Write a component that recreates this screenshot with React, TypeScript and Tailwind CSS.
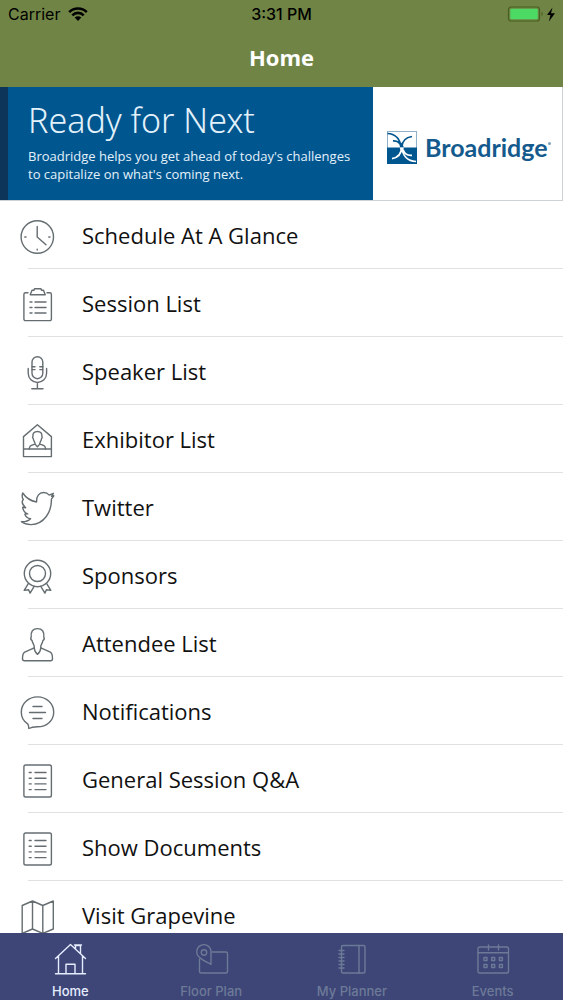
import type { ReactNode } from 'react'

function LineIcon({ children }: { children: ReactNode }) {
  return (
    <svg
      viewBox="0 0 36 36"
      className="size-9 shrink-0"
      fill="none"
      stroke="currentColor"
      strokeWidth="1.4"
      strokeLinecap="round"
      strokeLinejoin="round"
      aria-hidden="true"
    >
      {children}
    </svg>
  )
}

function ClockIcon() {
  return (
    <LineIcon>
      <circle cx="18.3" cy="18" r="16.2" />
      <path d="M18.2 7.5V18l8.8 7.8M5.8 18h1.2M29.8 18H31M18.2 30.2v.8" />
    </LineIcon>
  )
}

function ClipboardIcon() {
  return (
    <LineIcon>
      <path d="M9 5.8H6.5a1.6 1.6 0 0 0-1.6 1.6V32a1.6 1.6 0 0 0 1.6 1.6h24.3a1.6 1.6 0 0 0 1.6-1.6V7.4a1.6 1.6 0 0 0-1.6-1.6H28" />
      <path d="M11.200 7.800 13 3.300h2l.5-1.600h6.500l.5 1.600h2l1.700 4.500Z" />
      <path d="M11 15h2M16 15h11M11 20.5h2M16 20.5h11M11 26h2M16 26h11" />
    </LineIcon>
  )
}

function MicIcon() {
  return (
    <LineIcon>
      <rect x="13" y="1.7" width="10.8" height="22" rx="5.4" />
      <path d="M9.200 13.500v4.800a9.200 9.200 0 0 0 18.400 0v-4.800M18.400 27.700v6M12.800 33.700h11.200" />
      <path d="M13 11.800h3M20.800 11.800h3M13 14.600h3M20.800 14.600h3" />
    </LineIcon>
  )
}

function ExhibitorIcon() {
  return (
    <LineIcon>
      <path d="M4.500 13.600 18.400 1.800l14 11.800v20H4.500ZM4.500 26h28" />
      <path d="M10.300 26c.1-3 .7-3.600 5.700-4.900.7-1.500-1.500-2.600-1.700-5.300-.8-.8-.9-1.700-.4-2.500-.3-3 1.300-4.800 4.500-4.800s4.800 1.800 4.500 4.800c.5.8.4 1.700-.4 2.500-.2 2.700-2.400 3.800-1.700 5.300 5 1.300 5.600 1.900 5.700 4.900M16 21.100l2.400 2.700 2.400-2.700" />
    </LineIcon>
  )
}

function BirdIcon() {
  return (
    <LineIcon>
      <path d="M3.700 2c3.400 5 8 8 13.900 9C17.300 5.200 20 1.500 24.600 1.500c2.500 0 4.300 1 5.700 2.600l4-1.800-1.700 3 2.200-.5-2.400 3.400C32.800 21 25 33 12.300 33.600c-4 .1-7.300-.9-9.900-2.800 4 .2 6.900-.8 9.200-3-3-.6-5-2.200-5.800-4.700l2.900-.2c-3-1.100-4.700-3.500-5-6.700l2.900.6C3.300 13.700 2.400 10.600 4.300 8.500 2.900 6.500 2.900 4.400 3.700 2Z" />
    </LineIcon>
  )
}

function RibbonIcon() {
  return (
    <LineIcon>
      <circle cx="18.5" cy="14.5" r="13.2" />
      <circle cx="18.5" cy="14.5" r="8" />
      <path d="m9.300 24.700-4.100 6.700 4.400-.6 1.500 3.300 4.100-6.800M27.700 24.700l4.100 6.700-4.400-.6-1.500 3.300-4.100-6.800" />
    </LineIcon>
  )
}

function PersonIcon() {
  return (
    <LineIcon>
      <path d="M15.200 20.800c.9-2.200-1.700-4-2.100-7.200-1.400-.9-1.600-2.400-.9-3.600-.6-5.400 1.600-8.400 6.300-8.400s6.900 3 6.300 8.400c.7 1.200.5 2.700-.9 3.600-.4 3.200-3 5-2.100 7.200l9.500 4.300c1.800 1 2.200 3.200 2.200 6.700 0 1.200-.7 1.900-1.900 1.900H5.400c-1.200 0-1.900-.7-1.900-1.900 0-3.500.4-5.700 2.200-6.700Z" />
      <path d="M15.200 20.800c.3 3.300 1.500 5.300 3.300 6.600 1.800-1.300 3-3.300 3.300-6.600" />
    </LineIcon>
  )
}

function MessageIcon() {
  return (
    <LineIcon>
      <path d="M9.800 33.500c-.1-1.800-.2-3.200-.9-4.400C4.700 26.300 2.300 22 2.300 17.200c0-8.500 7.200-15.300 16.200-15.300s16.200 6.800 16.200 15.300-7.200 14.600-16.200 14.600c-3.500 0-6.200.3-8.700 1.700Z" />
      <path d="M14 11.500h9M10.500 17.500h16M14 23.500h9" />
    </LineIcon>
  )
}

function DocumentIcon() {
  return (
    <LineIcon>
      <rect x="4.9" y="2" width="27.5" height="32" rx="1.8" />
      <path d="M10.200 9.500h2M16 9.500h11M10.200 15.200h2M16 15.200h11M10.200 20.900h2M16 20.900h11M10.200 26.600h2M16 26.600h11" />
    </LineIcon>
  )
}

function MapIcon() {
  return (
    <LineIcon>
      <path d="M3.200 6.500 13.500 2l10.300 4.500L34.300 2v28L23.800 34.500 13.500 30 3.200 34.500ZM13.500 2v28M23.800 6.500v28" />
    </LineIcon>
  )
}

function HomeIcon() {
  return (
    <LineIcon>
      <path d="M3.500 17.500 18.500 3.500l15 14M6.500 15v17.700M30.500 15v17.700M3.500 32.700h30M14 32.700v-9.500h9v9.500M23.500 8V4.500h5v8.300M22.500 4h7" />
    </LineIcon>
  )
}

function FloorPlanIcon() {
  return (
    <LineIcon>
      <path d="M19 11h14c1 0 1.500.5 1.500 1.500v18c0 1-.5 1.500-1.500 1.500H8c-1 0-1.500-.5-1.500-1.500V18" />
      <path d="M18 23.500c-4-2.500-8.500-4-11.300-7A7.100 7.100 0 1 1 18 11Z" />
      <circle cx="11" cy="11.500" r="2.700" />
    </LineIcon>
  )
}

function PlannerIcon() {
  return (
    <LineIcon>
      <rect x="7.500" y="4.500" width="23.500" height="27.500" rx="1.500" />
      <path d="M25 4.500V32M5 9.500h5M5 13h5M5 16.500h5M5 20h5M5 23.500h5M5 27h5" />
    </LineIcon>
  )
}

function CalendarIcon() {
  return (
    <LineIcon>
      <rect x="3" y="6" width="30.500" height="26" rx="1.800" />
      <path d="M3 11.800h30.500M13.500 4v5M23.500 4v5M9 16.500h3v3H9ZM16.700 16.500h3v3h-3ZM24.400 16.500h3v3h-3ZM9 23.500h3v3H9ZM16.700 23.500h3v3h-3ZM24.400 23.500h3v3h-3Z" />
    </LineIcon>
  )
}

function StatusBar() {
  return (
    <div className="grid grid-cols-3 items-center h-7 px-2 text-black font-['Inter',sans-serif] text-base">
      <div className="flex items-center gap-2">
        <span>Carrier</span>
        <svg viewBox="0 0 20 14" className="w-5 h-3.5" fill="none" stroke="currentColor" strokeWidth="2.6" aria-label="Wi-Fi">
          <path d="M1.200 5.100a12.500 12.500 0 0 1 17.600 0M4.300 8.300a8 8 0 0 1 11.400 0" />
          <path d="M6.700 10.600a4.700 4.700 0 0 1 6.600 0L10 13.900Z" fill="currentColor" stroke="none" />
        </svg>
      </div>
      <span className="text-center font-medium">3:31 PM</span>
      <svg viewBox="0 0 50 18" className="w-[50px] h-[18px] justify-self-end" aria-label="Battery charging">
        <rect x="3.500" y="2" width="31" height="14" rx="2.500" fill="none" stroke="#46601f" strokeWidth="1.200" />
        <rect x="5.300" y="3.800" width="27.500" height="10.500" rx="1" fill="#4cd964" />
        <path d="M36.500 6.800c1.600.6 1.600 3.800 0 4.400Z" fill="#46601f" />
        <path d="M47.500 2.500 42 10h3.400l-1.500 6.500L50 8.200h-4Z" fill="currentColor" />
      </svg>
    </div>
  )
}

function BroadridgeMark() {
  return (
    <svg viewBox="0 0 30 33" className="w-[30px] h-[33px] shrink-0" fill="none" aria-hidden="true">
      <rect x=".5" y=".5" width="29" height="32" fill="#fff" stroke="#8fb0c9" />
      <path d="M0 16.500h30V33H0Z" fill="#00568f" />
      <path d="M.5 2.500c7 .3 12 4 13.500 13M6 9.800c3.500-.2 7 1.300 8 5.700M25 5.500c-6 .8-9.700 4-10.200 10.500" stroke="#00568f" strokeWidth="1.700" />
      <path d="M14.500 16.500c0 6-3.500 10-9.500 11.200M15 16.500c.5 8 5.500 13.500 14 14M16 18.500c1.500 4.500 4.500 6.200 9 5.800" stroke="#fff" strokeWidth="1.700" />
      <path d="m12.500 16.500 2-5 2.500 5Z" fill="#00568f" />
      <path d="m12.500 16.500 2.500 5 2-5Z" fill="#fff" />
    </svg>
  )
}

function Banner() {
  return (
    <a href="#broadridge" className="flex h-[114px] shrink-0 bg-white border-b border-[#ccd2d5]">
      <div className="w-2 bg-[#0d3559]" />
      <div className="flex-1 bg-[#00568f] text-[#e3f1fb] pl-5 pt-3">
        <p className="font-['Noto_Sans',sans-serif] font-light text-[34px] leading-[42px] whitespace-nowrap">Ready for Next</p>
        <p className="text-[13px] leading-[18px] pt-1.5 whitespace-nowrap">
          Broadridge helps you get ahead of today's challenges
          <br />
          to capitalize on what's coming next.
        </p>
      </div>
      <div className="w-[190px] flex items-center gap-2 pl-3.5 pt-2 border-r border-[#ccd2d5]">
        <BroadridgeMark />
        <span className="flex items-center text-[#145a8d] font-bold font-['Lato',sans-serif] text-[25px]">
          Broadridge<span className="size-[3px] rounded-full bg-[#7ba3c0] mb-2" />
        </span>
      </div>
    </a>
  )
}

const menu = [
  { label: 'Schedule At A Glance', Icon: ClockIcon },
  { label: 'Session List', Icon: ClipboardIcon },
  { label: 'Speaker List', Icon: MicIcon },
  { label: 'Exhibitor List', Icon: ExhibitorIcon },
  { label: 'Twitter', Icon: BirdIcon },
  { label: 'Sponsors', Icon: RibbonIcon },
  { label: 'Attendee List', Icon: PersonIcon },
  { label: 'Notifications', Icon: MessageIcon },
  { label: 'General Session Q&A', Icon: DocumentIcon },
  { label: 'Show Documents', Icon: DocumentIcon },
  { label: 'Visit Grapevine', Icon: MapIcon },
]

const tabs = [
  { label: 'Home', Icon: HomeIcon, active: true },
  { label: 'Floor Plan', Icon: FloorPlanIcon },
  { label: 'My Planner', Icon: PlannerIcon },
  { label: 'Events', Icon: CalendarIcon },
]

export default function App() {
  return (
    <div className="h-screen flex flex-col bg-white font-['Open_Sans',sans-serif]">
      <header className="h-[87px] shrink-0 bg-[#708545]">
        <StatusBar />
        <h1 className="text-center text-white font-bold text-[22px] leading-[58px]">Home</h1>
      </header>
      <Banner />
      <main className="flex-1 min-h-0 overflow-hidden">
        <ul>
          {menu.map(({ label, Icon }) => (
            <li key={label}>
              <a href="#menu" className="flex items-center gap-[27px] h-[67px] pl-[19px] pt-1 text-[#656d71]">
                <Icon />
                <span className="pb-0.5 text-[22px] text-[#111] whitespace-nowrap">{label}</span>
              </a>
              <div className="ml-7 h-px bg-[#dfe1e2]" />
            </li>
          ))}
        </ul>
      </main>
      <nav className="h-[67px] shrink-0 grid grid-cols-4 bg-[#3d4677] font-['Inter',sans-serif]">
        {tabs.map(({ label, Icon, active }) => (
          <a
            key={label}
            href="#tab"
            aria-current={active ? 'page' : undefined}
            className={`flex flex-col items-center pt-2 text-[13px] leading-5 font-medium ${active ? 'text-[#e6ecff]' : 'text-[#6d7a97]'}`}
          >
            <Icon />
            <span className="pt-1">{label}</span>
          </a>
        ))}
      </nav>
    </div>
  )
}
